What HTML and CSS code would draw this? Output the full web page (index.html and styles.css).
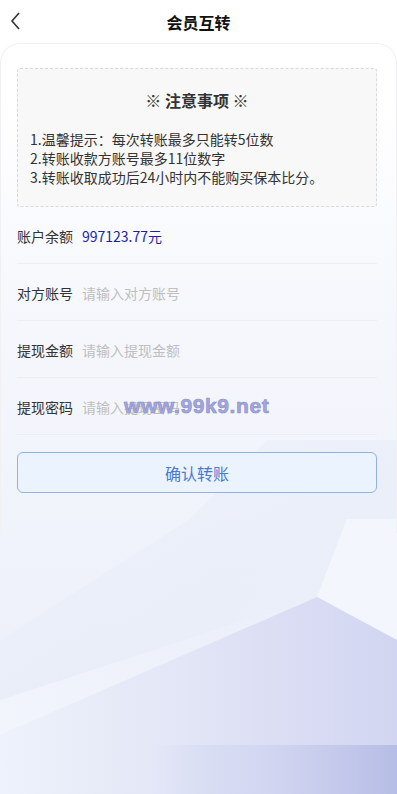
FILE: index.html
```html
<!DOCTYPE html>
<html lang="zh-CN">
<head>
<meta charset="utf-8">
<meta name="viewport" content="width=device-width, initial-scale=1">
<title>会员互转</title>
<link rel="stylesheet" href="styles.css">
</head>
<body>
<div class="page">
  <svg class="bg" viewBox="0 0 397 794" preserveAspectRatio="none" aria-hidden="true">
    <defs>
      <linearGradient id="base" x1="0" y1="0" x2="0" y2="1">
        <stop offset="0" stop-color="#ffffff"/>
        <stop offset="0.12" stop-color="#ffffff"/>
        <stop offset="0.4" stop-color="#f5f7fc"/>
        <stop offset="1" stop-color="#eaeef9"/>
      </linearGradient>
      <linearGradient id="mid" x1="0" y1="0" x2="1" y2="1">
        <stop offset="0" stop-color="#eef2fb"/>
        <stop offset="0.5" stop-color="#e6ebf7"/>
        <stop offset="1" stop-color="#e9edf8"/>
      </linearGradient>
      <linearGradient id="low" x1="0" y1="0" x2="1" y2="0">
        <stop offset="0" stop-color="#eef2fb"/>
        <stop offset="0.45" stop-color="#e2e6f6"/>
        <stop offset="1" stop-color="#d2d5f1"/>
      </linearGradient>
      <linearGradient id="band" x1="0" y1="0" x2="1" y2="0">
        <stop offset="0" stop-color="#c9cdee" stop-opacity="0"/>
        <stop offset="0.45" stop-color="#cdd1ef" stop-opacity="0.6"/>
        <stop offset="1" stop-color="#b6bde6"/>
      </linearGradient>
      <linearGradient id="sheen" x1="0" y1="1" x2="1" y2="0">
        <stop offset="0" stop-color="#f4f7fd" stop-opacity="0.8"/>
        <stop offset="1" stop-color="#f4f7fd" stop-opacity="0"/>
      </linearGradient>
    </defs>
    <rect x="0" y="0" width="397" height="794" fill="url(#base)"/>
    <polygon points="267,440 397,440 397,519 347,519 317,597 0,735 0,640 190,519" fill="url(#mid)" opacity="0.55"/>
    <polygon points="0,735 317,597 0,700" fill="url(#sheen)"/>
    <polygon points="347,519 397,519 397,640 317,597" fill="#f3f6fc"/>
    <polygon points="0,735 317,597 397,640 397,794 0,794" fill="url(#low)"/>
    <polygon points="150,745 397,745 397,794 150,794" fill="url(#band)"/>
  </svg>

  <header class="topbar">
    <span class="back">
      <svg width="12" height="20" viewBox="0 0 12 20" aria-hidden="true">
        <path d="M9 2 L2 10 L9 18" fill="none" stroke="#333" stroke-width="1.6"/>
      </svg>
    </span>
    <h1 class="title">会员互转</h1>
    <span></span>
  </header>

  <main class="panel">
    <section class="notice">
      <h2 class="notice-title">※ 注意事项 ※</h2>
      <p class="notice-line">1.温馨提示：每次转账最多只能转5位数</p>
      <p class="notice-line">2.转账收款方账号最多11位数字</p>
      <p class="notice-line">3.转账收取成功后24小时内不能购买保本比分。</p>
    </section>

    <div class="form">
      <div class="row">
        <span class="label">账户余额</span>
        <span class="balance">997123.77元</span>
      </div>
      <div class="row">
        <span class="label">对方账号</span>
        <input class="field" type="text" placeholder="请输入对方账号">
      </div>
      <div class="row">
        <span class="label">提现金额</span>
        <input class="field" type="text" placeholder="请输入提现金额">
      </div>
      <div class="row">
        <span class="label">提现密码</span>
        <input class="field" type="password" placeholder="请输入提现密码">
        <span class="watermark">www.99k9.net</span>
      </div>
    </div>

    <button class="submit" type="button">确认转账</button>
  </main>
</div>
</body>
</html>
```

FILE: styles.css
```css
* { box-sizing: border-box; }

html, body {
  margin: 0;
  padding: 0;
}

body {
  font-family: "Noto Sans CJK SC", "Noto Sans", sans-serif;
  color: #333;
  background: #fff;
}

.page {
  position: relative;
  width: 397px;
  min-height: 794px;
  overflow: hidden;
}

.bg {
  position: absolute;
  left: 0;
  top: 0;
  width: 100%;
  height: 100%;
  z-index: 0;
}

.topbar {
  position: relative;
  z-index: 1;
  height: 43px;
  display: grid;
  grid-template-columns: 40px 1fr 40px;
  align-items: center;
  background: #fff;
}

.back {
  display: flex;
  align-items: center;
  padding-left: 10px;
  height: 100%;
}

.back svg { display: block; margin-top: -2px; }

.title {
  margin: 0;
  text-align: center;
  font-size: 16px;
  font-weight: 700;
  color: #111;
  line-height: 22px;
}

.panel {
  position: relative;
  z-index: 1;
  border: 1px solid #f1f1f3;
  border-bottom: none;
  border-radius: 20px 20px 0 0;
  padding: 24px 19px 40px 16px;
}

.notice {
  border: 1px dashed #d9d9d9;
  border-radius: 3px;
  background: #f8f8f8;
  padding: 20px 12px 19px;
}

.notice-title {
  margin: 0 0 19px;
  text-align: center;
  font-size: 16px;
  font-weight: 700;
  line-height: 22px;
  color: #333;
}

.notice-line {
  margin: 0;
  font-size: 14px;
  line-height: 19px;
  color: #333;
}

.form {
  display: flex;
  flex-direction: column;
}

.row {
  position: relative;
  height: 57px;
  display: flex;
  align-items: center;
  gap: 9px;
  border-bottom: 1px solid #eceef4;
  padding-top: 2px;
}

.label {
  font-size: 14px;
  color: #333;
  white-space: nowrap;
}

.balance {
  font-size: 14px;
  color: #1f1fa6;
}

.field {
  flex: 1;
  min-width: 0;
  border: none;
  outline: none;
  background: transparent;
  padding: 0;
  font-family: inherit;
  font-size: 14px;
  color: #333;
}

.field::placeholder { color: #bfbfbf; }

.watermark {
  position: absolute;
  left: 107px;
  top: 16px;
  font-family: "Liberation Sans", Arial, sans-serif;
  font-weight: 700;
  font-size: 21px;
  letter-spacing: 0.6px;
  color: #a3a6dc;
  -webkit-text-stroke: 0.6px #8b8ec9;
  pointer-events: none;
}

.submit {
  display: block;
  width: 100%;
  height: 41px;
  margin-top: 17px;
  border: 1px solid #8fb3e4;
  border-radius: 6px;
  background: #ebf3fe;
  color: #4b79cf;
  font-family: inherit;
  font-size: 16px;
}
```
